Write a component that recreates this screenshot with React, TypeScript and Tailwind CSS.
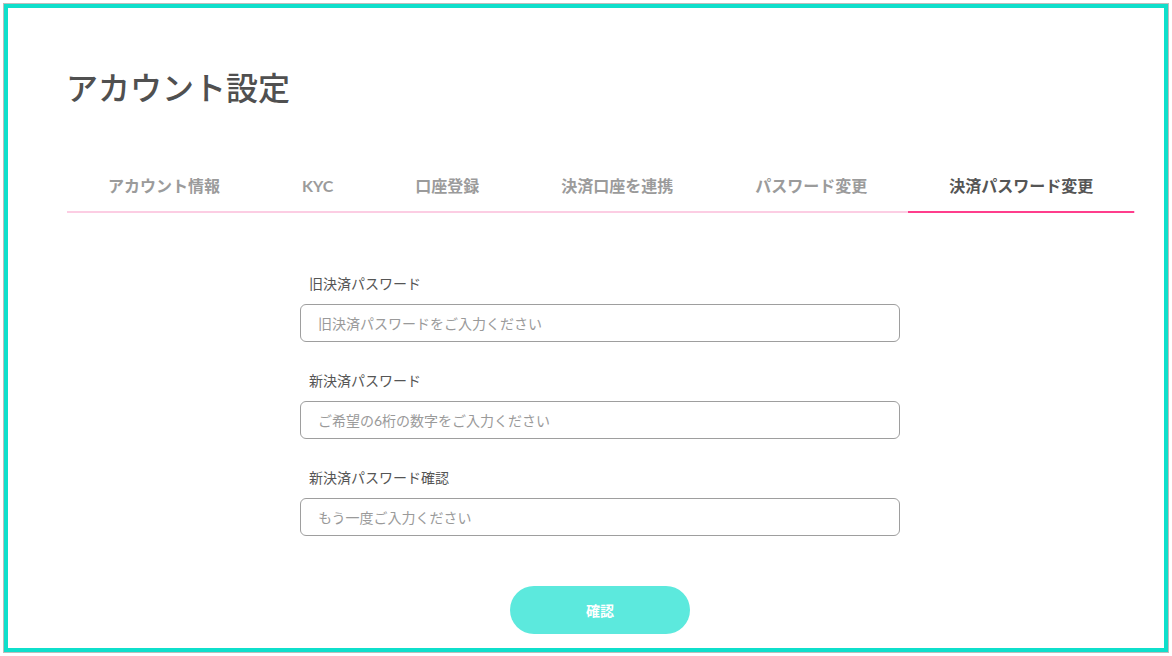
import { useState } from "react";

const tabs = ["アカウント情報", "KYC", "口座登録", "決済口座を連携", "パスワード変更", "決済パスワード変更"];

const fields = [
  { label: "旧決済パスワード", placeholder: "旧決済パスワードをご入力ください" },
  { label: "新決済パスワード", placeholder: "ご希望の6桁の数字をご入力ください" },
  { label: "新決済パスワード確認", placeholder: "もう一度ご入力ください" },
];

const App = () => {
  const [active, setActive] = useState(5);

  return (
    <div
      className="w-[1172px] h-[656px] bg-white p-[4px]"
      style={{ fontFamily: '"Lato", "Noto Sans CJK JP", sans-serif' }}
    >
      <div className="h-full border-4 border-[#0fdfcb] shadow-[0_0_0_1px_#bdbdbd] pt-[56px] pl-[58px] pr-[30px]">
        <h1 className="text-[32px] leading-[48px] font-medium text-[#505050]">アカウント設定</h1>

        {/* Tabs */}
        <div className="mt-[62px] ml-[1px] -mr-[1px] flex border-b-2 border-[#fccde3]">
          {tabs.map((t, i) => (
            <button
              key={t}
              onClick={() => setActive(i)}
              className={`shrink-0 whitespace-nowrap px-[41px] pb-[13px] -mb-[2px] border-b-2 text-[16px] leading-[24px] font-bold ${
                active === i ? "border-[#ff3d8c] text-[#555555]" : "border-transparent text-[#9b9b9b]"
              }`}
            >
              {t}
            </button>
          ))}
        </div>

        {/* Form */}
        <div className="mx-auto w-[600px] mt-[61px] flex flex-col gap-[29px]">
          {fields.map((f) => (
            <div key={f.label} className="flex flex-col gap-[10px]">
              <label className="pl-[9px] text-[14px] leading-[20px] font-normal text-[#555555]">{f.label}</label>
              <input
                type="password"
                placeholder={f.placeholder}
                className="h-[38px] w-full rounded-[6px] border border-[#9e9e9e] px-[17px] text-[14px] text-[#555] placeholder:text-[#9a9a9a] outline-none"
              />
            </div>
          ))}
          <button className="mx-auto mt-[21px] w-[180px] h-[48px] rounded-full bg-[#5ce9dd] text-white text-[14px] font-bold">
            確認
          </button>
        </div>
      </div>
    </div>
  );
};

export default App;
